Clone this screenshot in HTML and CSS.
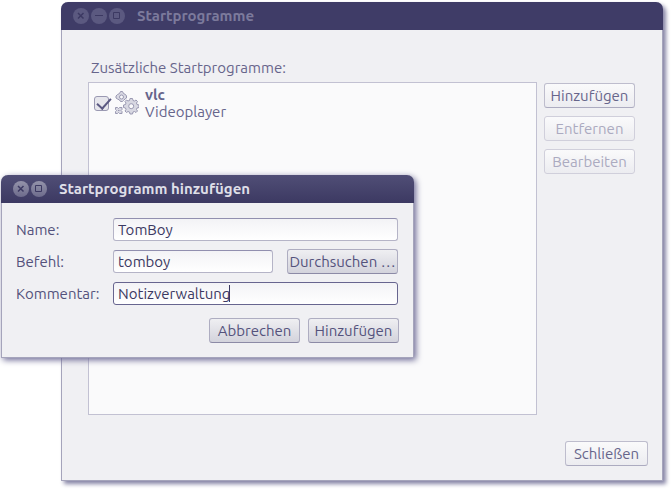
FILE: index.html
```html
<!DOCTYPE html>
<html lang="de">
<head>
    <meta charset="UTF-8">
    <meta name="viewport" content="width=device-width, initial-scale=1.0">
    <title>Startprogramme</title>
    <link rel="stylesheet" href="styles.css">
</head>
<body>
    <main class="window main-window">
        <header class="titlebar inactive">
            <button class="win-btn" aria-label="Schließen"><svg viewBox="0 0 16 16"><path class="cross" d="M5 5l5.500 5.500M10.500 5L5 10.500"/></svg></button>
            <button class="win-btn" aria-label="Minimieren"><svg viewBox="0 0 16 16"><path d="M4 7.500h8"/></svg></button>
            <button class="win-btn" aria-label="Maximieren"><svg viewBox="0 0 16 16"><path d="M4.500 4.500h6v6h-6z"/></svg></button>
            <h1>Startprogramme</h1>
        </header>
        <div class="content">
            <h2 class="list-label">Zusätzliche Startprogramme:</h2>
            <div class="columns">
                <ul class="program-list">
                    <li>
                        <input type="checkbox" id="vlc" class="check" checked>
                        <svg class="gears" viewBox="0 0 24 24">
                            <!-- upper left -->
                            <path class="gear" d="M5.500.500h2l1 2 2 1 1 1.500v2l-1.500 1-1.500 1.500-1 1h-2l-1-1.500-2-1-1.500-1v-2l1.500-1.500 2-1z"/>
                            <circle class="hole" cx="6.500" cy="6" r="2"/>
                            <!-- right -->
                            <path class="gear" d="M15 7.500h2.500l.5 2 1.500.5 1.500-1 1.500 1.500-1 1.500.500 1.500 2 .5v2.500l-2 .5-.5 1.500 1 1.500-1.500 1.500-1.500-1-1.500.5-.5 2H15l-.5-2-1.500-.5-1.500 1-1.500-1.500 1-1.500-.5-1.500-2-.5V14l2-.5.5-1.500-1-1.500 1.500-1.500 1.500 1 1.500-.5z"/>
                            <circle class="hole" cx="16.200" cy="15.200" r="2.500"/>
                            <!-- lower left -->
                            <path class="gear" d="M.500 16.500h2l1 1 1-1h2.500v2l-1 1 1 1v2H4.500l-1-1-1 1h-2v-2l1-1-1-1z"/>
                            <path class="hole" d="M3 19.500h1.500"/>
                        </svg>
                        <label for="vlc"><strong>vlc</strong><br>Videoplayer</label>
                    </li>
                </ul>
                <div class="side-buttons">
                    <button class="btn">Hinzufügen</button>
                    <button class="btn" disabled>Entfernen</button>
                    <button class="btn" disabled>Bearbeiten</button>
                </div>
            </div>
            <footer class="footer">
                <button class="btn close-btn">Schließen</button>
            </footer>
        </div>
    </main>

    <form class="window dialog" role="dialog" aria-labelledby="dialog-title">
        <header class="titlebar">
            <button type="button" class="win-btn" aria-label="Schließen"><svg viewBox="0 0 16 16"><path class="cross" d="M5 5l5.500 5.500M10.500 5L5 10.500"/></svg></button>
            <button type="button" class="win-btn" aria-label="Maximieren"><svg viewBox="0 0 16 16"><path d="M4.500 4.500h6v6h-6z"/></svg></button>
            <h1 id="dialog-title">Startprogramm hinzufügen</h1>
        </header>
        <div class="fields">
            <label for="name">Name:</label>
            <input type="text" id="name" value="TomBoy">
            <label for="command">Befehl:</label>
            <div class="field-row">
                <input type="text" id="command" value="tomboy">
                <button type="button" class="btn browse-btn">Durchsuchen …</button>
            </div>
            <label for="comment">Kommentar:</label>
            <div class="field-row caret-field">
                <input type="text" id="comment" value="Notizverwaltung" autofocus>
                <span class="caret"></span>
            </div>
        </div>
        <div class="actions">
            <button type="button" class="btn">Abbrechen</button>
            <button type="button" class="btn">Hinzufügen</button>
        </div>
    </form>
</body>
</html>
```

FILE: styles.css
```css
* {
    box-sizing: border-box;
}
html, body {
    height: 100%;
}
body {
    margin: 0;
    background: #fff;
    color: #67658b;
    font-family: Ubuntu, "Noto Sans", sans-serif;
    font-size: 15px;
    line-height: 17px;
    overflow: hidden;
}
button, input {
    font: inherit;
    margin: 0;
}

/* Windows */
.window {
    position: absolute;
    display: flex;
    flex-direction: column;
    background: #f0f0f3;
    border: 1px solid #a5a4bb;
    border-top: 0;
    border-radius: 7px 7px 0 0;
}
.main-window {
    top: 2px;
    right: 9px;
    bottom: 8px;
    left: 61px;
    box-shadow: 3px 3px 4px #8583a5;
}
.dialog {
    top: 175px;
    left: 1px;
    width: 413px;
    box-shadow: 2px 2px 6px #6b6894;
}

.titlebar {
    display: flex;
    align-items: center;
    gap: 2px;
    height: 28px;
    margin: 0 -1px;
    padding: 0 12px;
    border-radius: 7px 7px 0 0;
    background: linear-gradient(#504e76, #3c3962);
    color: #dfdfe8;
}
.titlebar h1 {
    margin: 0 0 0 10px;
    padding-bottom: 1px;
    font-size: 15px;
    font-weight: bold;
}
.win-btn {
    width: 16px;
    height: 16px;
    padding: 0;
    border: 0;
    border-radius: 50%;
    background: linear-gradient(#9493aa, #6d6b8c);
}
.win-btn svg {
    display: block;
    fill: none;
    stroke: #3c3962;
    stroke-width: 1;
}
.win-btn .cross {
    stroke-width: 1.5;
}
.inactive {
    background: #3f3c67;
    color: #7c7a9c;
}
.inactive .win-btn {
    background: #5b5980;
}

/* Buttons */
.btn {
    height: 25px;
    padding: 0;
    border: 1px solid #bebdcd;
    border-bottom-color: #acabc0;
    border-radius: 3px;
    background: linear-gradient(#fafafb, #ececf0);
    color: #67658b;
    white-space: nowrap;
}
.btn:disabled {
    border-color: #d0cfdb;
    color: #abaac0;
}

/* Main window */
.content {
    flex: 1;
    display: flex;
    flex-direction: column;
    padding: 29px 14px 14px 26px;
}
.list-label {
    margin: 0 0 6px 3px;
    font-size: 15px;
    font-weight: normal;
}
.columns {
    flex: 1;
    display: flex;
    gap: 7px;
    padding-right: 13px;
}
.program-list {
    flex: 1;
    margin: 0;
    padding: 3px 5px;
    list-style: none;
    background: #fafafb;
    border: 1px solid #c2c1d2;
}
.program-list li {
    display: flex;
    align-items: center;
}
.side-buttons {
    display: flex;
    flex-direction: column;
    gap: 8px;
    width: 91px;
    padding-top: 1px;
}
.check {
    appearance: none;
    position: relative;
    width: 15px;
    height: 15px;
    border: 1px solid #9a99b2;
    border-radius: 3px;
    background: #e6e6ec;
}
.check:checked::after {
    content: "";
    position: absolute;
    left: 5px;
    top: -2px;
    width: 6px;
    height: 12px;
    border: solid #5b5982;
    border-width: 0 2px 2px 0;
    transform: rotate(42deg);
}
.gears {
    width: 24px;
    height: 24px;
    margin: 0 6px;
}
.gear {
    fill: #d8d8e2;
    stroke: #9a99b2;
}
.hole {
    fill: #fafafb;
    stroke: #9a99b2;
}
.footer {
    display: flex;
    justify-content: flex-end;
    margin-top: 26px;
}
.close-btn {
    width: 83px;
}

/* Dialog */
.fields {
    display: grid;
    grid-template-columns: 88px 1fr;
    gap: 8px 9px;
    align-items: center;
    padding: 15px 15px 0 14px;
    color: #54527c;
}
.fields input {
    width: 100%;
    height: 23px;
    padding: 0 4px;
    border: 1px solid #b5b4c7;
    border-top-color: #918faf;
    border-radius: 3px;
    background: linear-gradient(#f3f3f6, #fff);
    color: #3c3962;
    outline: none;
}
.fields input:focus {
    border: 1px solid #67658f;
    caret-color: transparent;
}
.field-row {
    display: flex;
    align-items: center;
    gap: 14px;
}
.field-row input {
    flex: 1;
    min-width: 0;
}
/* steady caret behind the text */
.caret-field {
    position: relative;
}
.caret {
    position: absolute;
    left: 116px;
    top: 3px;
    width: 1px;
    height: 17px;
    background: #3c3962;
}
.dialog .btn {
    border-color: #aeadc1;
    border-bottom-color: #8c8aa6;
    background: linear-gradient(#efeff2, #d3d3dc);
    color: #54527c;
}
.dialog .browse-btn {
    width: 111px;
}
.actions {
    display: flex;
    justify-content: flex-end;
    gap: 8px;
    padding: 13px 14px 14px;
}
.actions .btn {
    width: 91px;
}
```
